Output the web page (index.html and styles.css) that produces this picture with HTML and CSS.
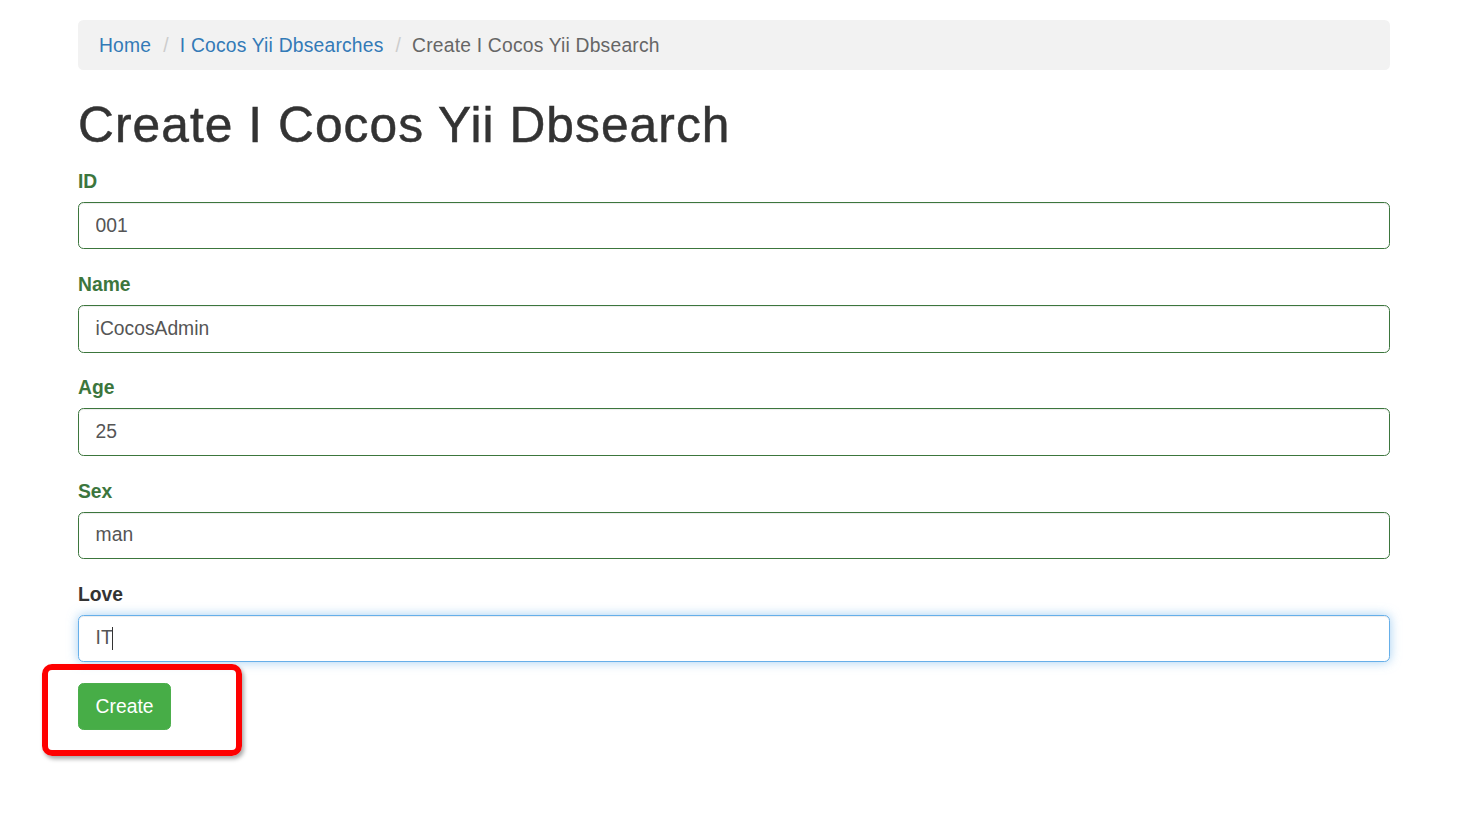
FILE: index.html
```html
<!DOCTYPE html>
<html lang="en">
<head>
<meta charset="utf-8">
<title>Create I Cocos Yii Dbsearch</title>
<link rel="stylesheet" href="styles.css">
</head>
<body>
<div class="container">
  <ul class="breadcrumb">
    <li><a href="#">Home</a></li>
    <li><a href="#">I Cocos Yii Dbsearches</a></li>
    <li class="active">Create I Cocos Yii Dbsearch</li>
  </ul>
  <h1 class="title">Create I Cocos Yii Dbsearch</h1>
  <form class="form">
    <div class="form-group has-success">
      <label class="control-label">ID</label>
      <input class="form-control" type="text" value="001">
    </div>
    <div class="form-group has-success">
      <label class="control-label">Name</label>
      <input class="form-control" type="text" value="iCocosAdmin">
    </div>
    <div class="form-group has-success">
      <label class="control-label">Age</label>
      <input class="form-control" type="text" value="25">
    </div>
    <div class="form-group has-success">
      <label class="control-label">Sex</label>
      <input class="form-control" type="text" value="man">
    </div>
    <div class="form-group">
      <label class="control-label">Love</label>
      <div class="field-wrap">
        <input class="form-control focused" type="text" value="IT">
        <span class="caret-line"></span>
      </div>
    </div>
    <div class="actions">
      <button type="button" class="btn-success">Create</button>
      <span class="highlight"></span>
    </div>
  </form>
</div>
</body>
</html>
```
FILE: styles.css
```css
html, body {
  margin: 0;
  padding: 0;
  background: #fff;
}
body {
  font-family: "Liberation Sans", Arial, Helvetica, sans-serif;
  font-size: 19.3px;
  color: #333;
}
.container {
  width: 1312px;
  margin: 0 80px 0 78px;
  padding-top: 20px;
}
.breadcrumb {
  list-style: none;
  margin: 0 0 27.6px 0;
  padding: 12px 21px 10px;
  height: 50px;
  box-sizing: border-box;
  background: #f2f2f2;
  border-radius: 5.5px;
  display: flex;
  align-items: center;
  line-height: 28px;
  letter-spacing: 0.2px;
}
.breadcrumb li {
  display: flex;
}
.breadcrumb li + li::before {
  content: "/";
  color: #ccc;
  padding: 0 11px 0 12px;
}
.breadcrumb a {
  color: #337ab7;
  text-decoration: none;
}
.breadcrumb .active {
  color: #666;
}
.title {
  font-size: 49.7px;
  font-weight: 400;
  line-height: 54.7px;
  margin: 0 0 14.8px 0;
  color: #333;
  letter-spacing: 1.05px;
  -webkit-text-stroke: 0.5px #333;
}
.form-group {
  margin-bottom: 20.9px;
}
.control-label {
  display: block;
  font-weight: 700;
  line-height: 29px;
  margin-bottom: 6px;
  color: #333;
}
.has-success .control-label {
  color: #3c763d;
}
.form-control {
  display: block;
  width: 100%;
  box-sizing: border-box;
  height: 47.3px;
  padding: 8px 16.6px;
  font-family: inherit;
  font-size: 19.3px;
  color: #555;
  background: #fff;
  border: 1px solid #ccc;
  border-radius: 5.5px;
  box-shadow: inset 0 1px 1px rgba(0,0,0,.075);
  outline: none;
}
.has-success .form-control {
  border-color: #3c763d;
}
.form-control.focused {
  border-color: #66afe9;
  box-shadow: inset 0 1px 1px rgba(0,0,0,.075), 0 0 11px rgba(102,175,233,.6);
}
.field-wrap {
  position: relative;
}
.caret-line {
  position: absolute;
  left: 34px;
  top: 12px;
  width: 1px;
  height: 23px;
  background: #333;
}
.actions {
  position: relative;
  padding-bottom: 40px;
}
.btn-success {
  display: inline-block;
  height: 47px;
  padding: 0 16.6px;
  font-family: inherit;
  font-size: 19.3px;
  color: #fff;
  background: #47ad47;
  border: 1px solid #4cae4c;
  border-radius: 5.5px;
  cursor: pointer;
}
.highlight {
  position: absolute;
  left: -36px;
  top: -19px;
  width: 200px;
  height: 92px;
  box-sizing: border-box;
  border: 6px solid #fe0000;
  border-radius: 10px;
  box-shadow: 2px 3px 4px rgba(0,0,0,.35);
  pointer-events: none;
}
```
